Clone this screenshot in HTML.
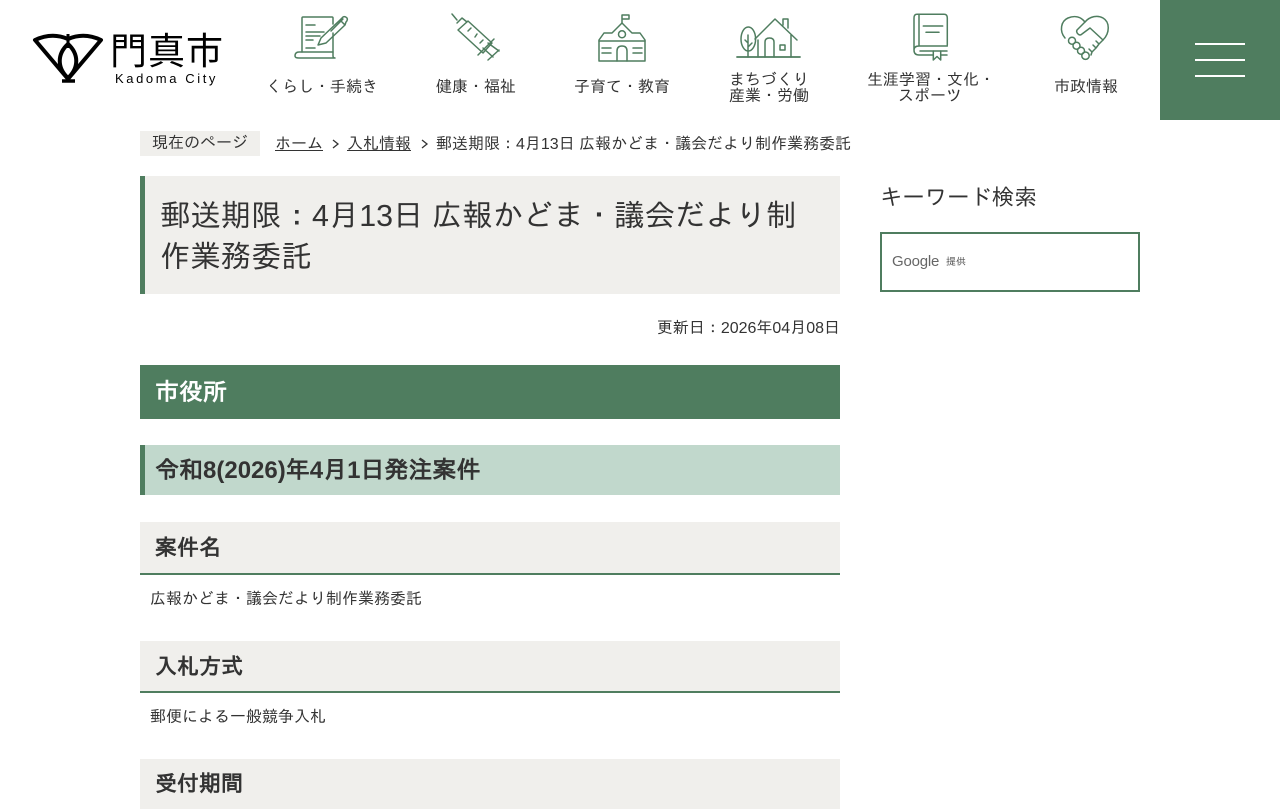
<!DOCTYPE html>
<html lang="ja"><head><meta charset="utf-8"><title>郵送期限：4月13日 広報かどま・議会だより制作業務委託</title>
<style>
html,body{margin:0;padding:0;background:#fff}
body{width:1280px;height:800px;overflow:hidden;position:relative;font-family:"Liberation Sans","IPAGothic",sans-serif;color:#333}
.a{position:absolute;white-space:nowrap}
.n{position:absolute;font-size:16px;line-height:16px;text-align:center;white-space:nowrap;color:#333}
svg{position:absolute;overflow:visible}
.i{fill:none;stroke:#4f7d5f;stroke-width:1.5;stroke-linejoin:round;stroke-linecap:round}
a{color:#333}
</style></head><body>
<svg style="left:0;top:0" width="130" height="90" fill="none" stroke="#000" stroke-width="4">
<path d="M35 40Q52 32 68 39Q84 32 101 40L68 79Z" stroke-linejoin="round"/>
<path d="M68 44C57 54 57 68 68 78C79 68 79 54 68 44Z"/>
<path d="M68 34V48" stroke-width="3"/><path d="M62 81H75" stroke-width="3.500"/>
</svg>
<div class="a" style="left:110px;top:23px;font-family:'Noto Sans CJK JP',sans-serif;font-size:37px;line-height:50px;color:#000;letter-spacing:1px">門真市</div>
<div class="a" style="left:115px;top:71px;font-size:13px;line-height:16px;color:#000;letter-spacing:2.600px">Kadoma City</div>

<svg class="i" style="left:280px;top:5px" width="80" height="60">
<path d="M22 47V13Q22 12 23 12H52Q53 12 53 13V19M53 28V47"/>
<path d="M15 51Q15 47 19 47H53V51Q53 53 55 53H19Q15 53 15 51Z"/>
<path d="M26 20H35M26 27H44M26 31H40M26 35H33M26 43H35"/>
<path d="M38 40L41 33 60 15 65 20 46 38ZM60 15L63 12Q65 11 67 13 68 15 66 17L65 20M63 14L51 26"/>
</svg>
<div class="n" style="left:266px;top:80px;width:112px">くらし・手続き</div>

<svg class="i" style="left:440px;top:5px" width="70" height="60">
<path d="M12 9L17 15M17 18L22 13 27 17M18 25L28 16 52 38 43 48ZM38 50L54 34"/>
<path d="M31 23L28 26M37 29L35 32M43 35L40 38"/>
<path d="M43 43L53 52M48 38L59 46M48 55L59 45"/>
</svg>
<div class="n" style="left:420px;top:80px;width:112px">健康・福祉</div>

<svg class="i" style="left:590px;top:5px" width="64" height="60">
<path d="M9 56V35L14 28H22L32 18 42 28H50L55 35V56Z"/>
<path d="M9 36H55"/>
<circle cx="32" cy="29.300" r="3.500"/><path d="M27 56V46Q27 41 32 41 37 41 37 46V56M12 43H21M12 48H21M43 43H52M43 48H52"/>
<path d="M32 18V10H39V14H32"/>
</svg>
<div class="n" style="left:566px;top:80px;width:112px">子育て・教育</div>

<svg class="i" style="left:730px;top:5px" width="80" height="60">
<path d="M7 52H70" stroke-width="1.800"/>
<ellipse cx="18.300" cy="34" rx="7.300" ry="12"/><path d="M18 52V30M15 35L18 38M22 38L18 42"/>
<path d="M25 34L45 14 67 35M28 35V52M61 30V52M53 20V14H58V23"/>
<path d="M35 52V37Q35 33 39.500 33 44 33 44 37V52M50 40H55V45H50Z"/>
</svg>
<div class="n" style="left:713px;top:73px;width:112px">まちづくり<br>産業・労働</div>

<svg class="i" style="left:905px;top:10px" width="50" height="55">
<path d="M9 40V8Q9 4.300 12 4.300H39Q42.300 4.300 42.300 8V35M42.300 36H14Q9 36 9 40 9 45 14 45H28M36 45H42M14 4.300V36M15 41H42"/>
<path d="M18.300 16H37.700M21 22.300H34"/><path d="M28.300 41V50L32 46.500 35.700 50V41"/>
</svg>
<div class="n" style="left:867px;top:73px;width:126px">生涯学習・文化・<br>スポーツ</div>

<svg class="i" style="left:1050px;top:5px" width="70" height="60">
<path d="M15 33C9 26 11 16 18 13 25 10 31 12 35 17 40 11 48 10 53 13 60 17 60 28 53 35"/>
<path d="M35 17L27 25Q26 27 28 29 30 31 32 29L40 23 53 35 49 39 46 36M49 39L46 43 43 40M46 43L42 47 39 44M42 47L41 50"/>
<circle cx="22" cy="35.700" r="3.500"/><circle cx="26.500" cy="40.700" r="3.500"/><circle cx="31" cy="45.700" r="3.500"/><circle cx="35.500" cy="50.700" r="3.700"/>
</svg>
<div class="n" style="left:1030px;top:80px;width:112px">市政情報</div>

<div class="a" style="left:1160px;top:0;width:120px;height:120px;background:#4f7d5f"></div>
<div class="a" style="left:1195px;top:43px;width:50px;height:2px;background:#fff"></div>
<div class="a" style="left:1195px;top:59px;width:50px;height:2px;background:#fff"></div>
<div class="a" style="left:1195px;top:75px;width:50px;height:2px;background:#fff"></div>

<div class="a" style="left:140px;top:131px;width:120px;height:25px;background:#f0efec;text-align:center;font-size:16px;line-height:26px">現在のページ</div>
<div class="a" style="left:275px;top:132px;font-size:16px;line-height:25px"><a href="#">ホーム</a></div>
<svg style="left:332px;top:139px" width="8" height="10" fill="none" stroke="#333" stroke-width="1.300"><path d="M1 1L6 5 1 9"/></svg>
<div class="a" style="left:347px;top:132px;font-size:16px;line-height:25px"><a href="#">入札情報</a></div>
<svg style="left:421px;top:139px" width="8" height="10" fill="none" stroke="#333" stroke-width="1.300"><path d="M1 1L6 5 1 9"/></svg>
<div class="a" style="left:436px;top:132px;font-size:16px;line-height:25px">郵送期限：4月13日 広報かどま・議会だより制作業務委託</div>

<div class="a" style="left:140px;top:176px;width:700px;height:118px;background:#f0efec"></div>
<div class="a" style="left:140px;top:176px;width:5px;height:118px;background:#4f7d5f"></div>
<div class="a" style="left:160px;top:196px;width:640px;font-size:30.400px;line-height:40.500px;white-space:normal">郵送期限：4月13日 広報かどま・議会だより制作業務委託</div>

<div class="a" style="left:440px;top:317px;width:400px;text-align:right;font-size:16px;line-height:24px">更新日：2026年04月08日</div>

<div class="a" style="left:140px;top:365px;width:685px;padding-left:15px;height:54px;background:#4f7d5f;color:#fff;font-weight:bold;font-size:24px;line-height:56px">市役所</div>
<div class="a" style="left:140px;top:445px;width:700px;height:50px;background:#c1d8cc"></div>
<div class="a" style="left:140px;top:445px;width:5px;height:50px;background:#4f7d5f"></div>
<div class="a" style="left:155px;top:446px;font-weight:bold;font-size:24px;line-height:50px">令和8(2026)年4月1日発注案件</div>

<div class="a" style="left:140px;top:522px;width:685px;padding-left:15px;height:51px;background:#f0efec;border-bottom:2px solid #4f7d5f;font-weight:bold;font-size:22px;line-height:51px">案件名</div>
<div class="a" style="left:150px;top:588px;font-size:16px;line-height:24px">広報かどま・議会だより制作業務委託</div>
<div class="a" style="left:140px;top:641px;width:685px;padding-left:15px;height:50px;background:#f0efec;border-bottom:2px solid #4f7d5f;font-weight:bold;font-size:22px;line-height:51px">入札方式</div>
<div class="a" style="left:150px;top:706px;font-size:16px;line-height:24px">郵便による一般競争入札</div>
<div class="a" style="left:140px;top:759px;width:685px;padding-left:15px;height:50px;background:#f0efec;font-weight:bold;font-size:22px;line-height:50px">受付期間</div>

<div class="a" style="left:880px;top:182px;font-size:22.400px;line-height:32px">キーワード検索</div>
<div class="a" style="left:880px;top:232px;width:256px;height:56px;border:2px solid #4f7d5f"></div>
<div class="a" style="left:892px;top:252px;font-size:15px;line-height:20px;color:#666;letter-spacing:-.2px">Google</div>
<div class="a" style="left:946px;top:256px;font-size:10px;line-height:14px;color:#555">提供</div>
</body></html>
